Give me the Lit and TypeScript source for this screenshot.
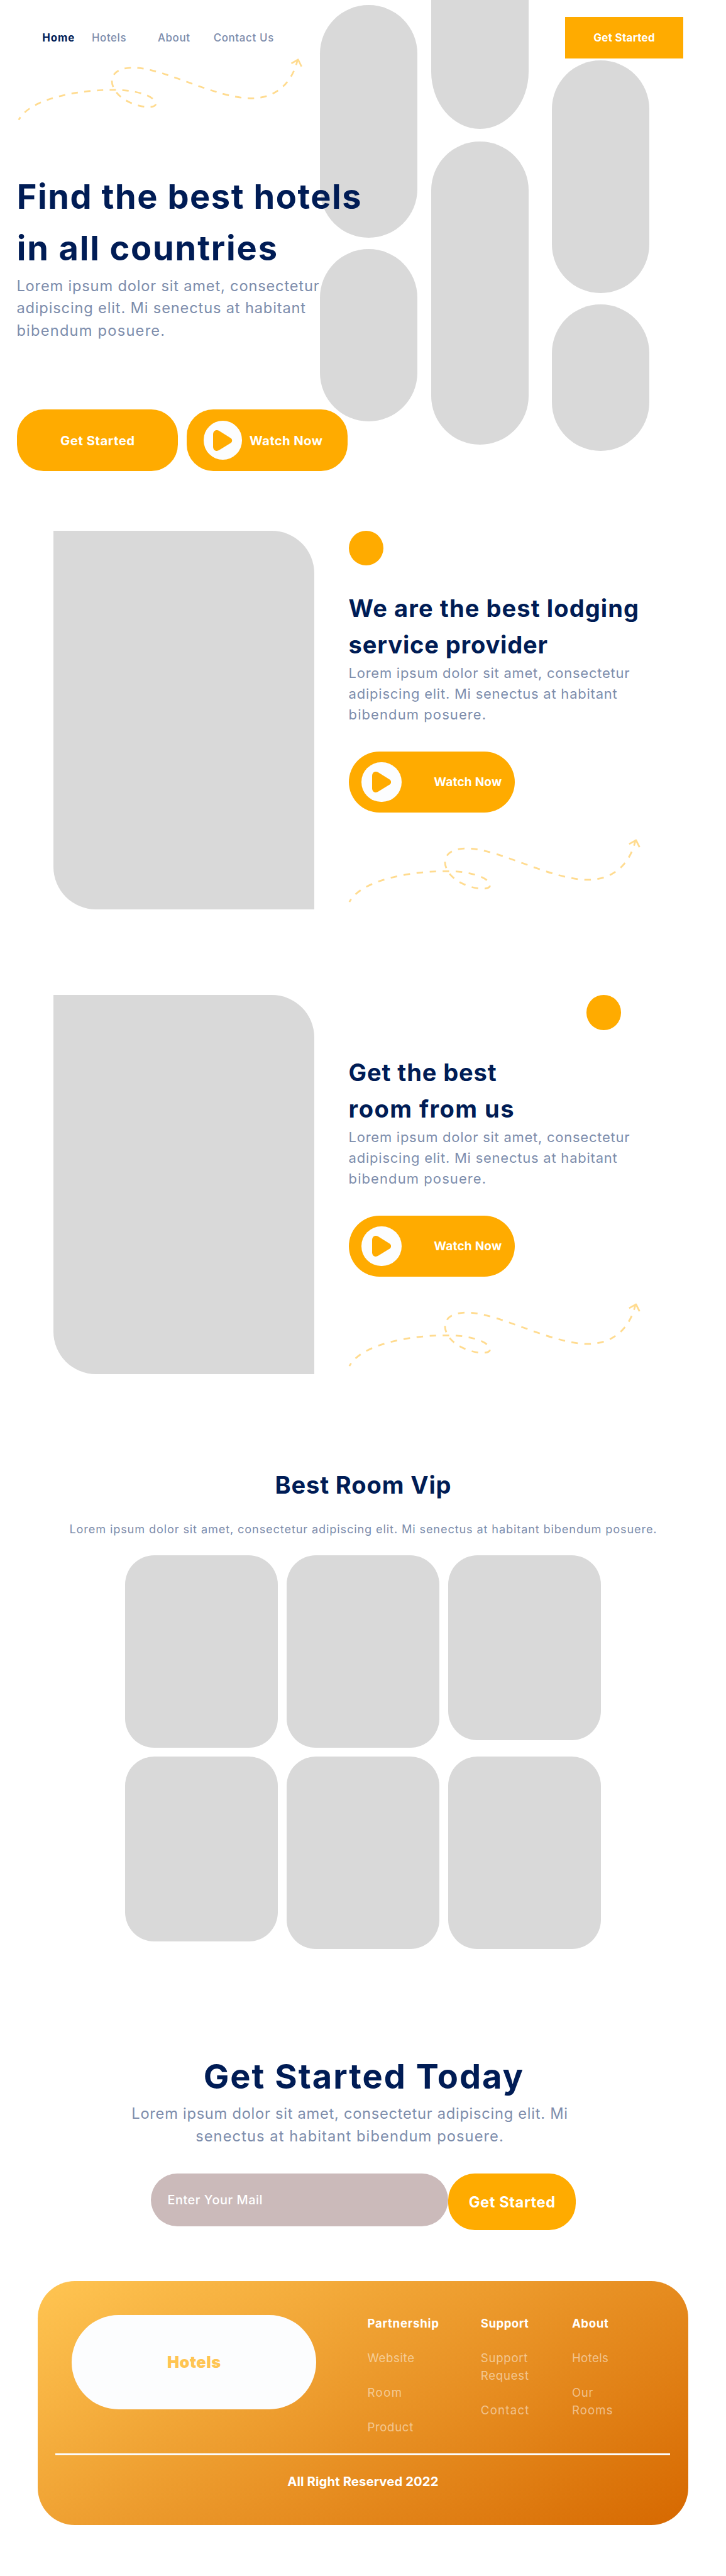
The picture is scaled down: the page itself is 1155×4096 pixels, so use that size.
import { LitElement, html, css, svg, unsafeCSS } from "lit";
import { customElement, property } from "lit/decorators.js";

// Design units are laid out on a 1366px wide canvas and scaled to the 1155px viewport.
const SCALE = 0.8455;
const u = (n: number) => unsafeCSS(`${(n * SCALE).toFixed(2)}px`);

type Line = [text: string, tracking: number];

const run = ([text, tracking]: Line) =>
  html`<span style="letter-spacing:${tracking}em;margin-right:${-tracking}em">${text}</span>`;

const lines = (items: Line[]) => items.map((l) => html`<span class="line">${run(l)}</span>`);

const base = css`
  * {
    box-sizing: border-box;
  }
  h1,
  h2,
  p {
    margin: 0;
  }
  .line {
    display: block;
    white-space: nowrap;
  }
  span {
    white-space: nowrap;
  }
  svg {
    display: block;
    flex: none;
  }
`;

@customElement("dashed-trail")
class DashedTrail extends LitElement {
  static styles = css`
    :host {
      display: block;
    }
    svg {
      display: block;
      width: 100%;
      height: 100%;
    }
    path {
      fill: none;
      stroke: #ffdb8f;
      stroke-width: 3.2;
    }
    .trail {
      stroke-dasharray: 12 12;
      stroke-dashoffset: 6;
    }
    .tip {
      stroke-linejoin: round;
    }
  `;
  render() {
    return html`<svg viewBox="32 106 540 124" preserveAspectRatio="none">
      ${svg`
        <path class="trail" d="M35.3 225C60 180 165 168 213 168.7C250 168 290 178 293.3 194C294 205 262 202 240 190C215 177 209 158 211 148C214 133 230 126 255 127C315 130 405 184.5 474 184.5C520 184 550 155 560 112"/>
        <path class="tip" d="M548.3 118.8L561 111.6L567.4 124.6"/>
      `}
    </svg>`;
  }
}

@customElement("play-badge")
class PlayBadge extends LitElement {
  static styles = css`
    :host {
      display: flex;
      align-items: center;
      justify-content: center;
      flex: none;
      width: ${u(72.5)};
      height: ${u(74)};
      border-radius: ${u(37)};
      background: #fcfdfe;
    }
    svg {
      width: ${u(36)};
      height: ${u(39)};
      fill: #ffab00;
    }
  `;
  render() {
    return html`<svg viewBox="0 0 36 39">
      ${svg`<path d="M0 8C0 3 3 0 7 0C8.6 0 10 .5 11.3 1.3L33 14.7C36.6 17 36.6 22 33 24.3L11.3 37.7C10 38.5 8.6 39 7 39C3 39 0 36 0 31Z"/>`}
    </svg>`;
  }
}

@customElement("feature-block")
class FeatureBlock extends LitElement {
  @property({ attribute: false }) heading: Line[] = [];
  @property({ type: Boolean, reflect: true }) right = false;

  static styles = [
    base,
    css`
      :host {
        display: grid;
        grid-template-columns: ${u(491)} ${u(554)};
        column-gap: ${u(64.2)};
        height: ${u(713)};
        padding-left: ${u(100.8)};
      }
      .photo {
        background: #d9d9d9;
        border-radius: 0 ${u(80)} 0 ${u(80)};
      }
      .dot {
        width: ${u(66)};
        height: ${u(66)};
        border-radius: 50%;
        background: #ffab00;
      }
      :host([right]) .dot {
        margin-left: ${u(447)};
      }
      h2 {
        margin-top: ${u(47)};
        font-size: ${u(45)};
        line-height: ${u(68)};
        font-weight: 750;
        color: #001c55;
      }
      p {
        font-size: ${u(26)};
        line-height: ${u(39)};
        color: #7d8dac;
      }
      .watch {
        display: flex;
        align-items: center;
        width: ${u(312.3)};
        height: ${u(115.7)};
        margin-top: ${u(49.1)};
        padding-left: ${u(24)};
        gap: ${u(60.5)};
        border-radius: ${u(58)};
        background: #ffab00;
        color: #fff;
        font-size: ${u(22.5)};
        font-weight: 700;
      }
      play-badge {
        width: ${u(76)};
      }
      dashed-trail {
        width: ${u(554)};
        height: ${u(127)};
        margin: ${u(46)} 0 0 ${u(-1.4)};
      }
    `,
  ];

  render() {
    return html`
      <div class="photo"></div>
      <div class="copy">
        <div class="dot"></div>
        <h2>${lines(this.heading)}</h2>
        <p>
          ${lines([
            ["Lorem ipsum dolor sit amet, consectetur", 0.0341],
            ["adipiscing elit. Mi senectus at habitant", 0.0354],
            ["bibendum posuere.", 0.0497],
          ])}
        </p>
        <div class="watch"><play-badge></play-badge>${run(["Watch Now", 0.012])}</div>
        <dashed-trail></dashed-trail>
      </div>
    `;
  }
}

@customElement("site-footer")
class SiteFooter extends LitElement {
  static styles = [
    base,
    css`
      :host {
        display: block;
        width: ${u(1223.8)};
        height: ${u(459)};
        border-radius: ${u(70)};
        padding-top: ${u(64)};
        background: linear-gradient(148deg, #ffc552 0%, #d66800 100%);
        color: #fff;
      }
      .top {
        display: grid;
        grid-template-columns: ${u(460)} ${u(213.4)} ${u(171.6)} ${u(120)};
        height: ${u(260.3)};
        padding-left: ${u(64)};
      }
      .logo {
        display: flex;
        align-items: center;
        justify-content: center;
        height: ${u(176.7)};
        border-radius: ${u(88.4)};
        background: #fcfdfe;
        color: #ffc552;
        font-size: ${u(30)};
        font-weight: 900;
      }
      .col {
        display: flex;
        flex-direction: column;
        gap: ${u(32.1)};
        margin-left: ${u(96.2)};
        margin-right: ${u(-96.2)};
        font-size: ${u(22)};
        line-height: ${u(33)};
      }
      .title {
        font-weight: 700;
      }
      .link {
        color: rgba(255, 255, 255, 0.5);
      }
      .rule {
        height: 3px;
        margin: 0 ${u(33.5)};
        background: #fafbfc;
      }
      .copyright {
        margin-top: ${u(31.3)};
        text-align: center;
        font-size: ${u(24)};
        line-height: ${u(36)};
        font-weight: 750;
      }
    `,
  ];

  private columns: { title: Line; links: Line[][] }[] = [
    {
      title: ["Partnership", 0.0389],
      links: [[["Website", 0.0358]], [["Room", 0.08]], [["Product", 0.0363]]],
    },
    {
      title: ["Support", 0.0249],
      links: [
        [
          ["Support", 0.0388],
          ["Request", 0.0411],
        ],
        [["Contact", 0.0683]],
      ],
    },
    {
      title: ["About", 0.0332],
      links: [
        [["Hotels", 0.0211]],
        [
          ["Our", 0.0379],
          ["Rooms", 0.0626],
        ],
      ],
    },
  ];

  render() {
    return html`
      <div class="top">
        <div class="logo">${run(["Hotels", 0.0199])}</div>
        ${this.columns.map(
          (c) => html`<div class="col">
            <div class="title">${run(c.title)}</div>
            ${c.links.map((l) => html`<div class="link">${lines(l)}</div>`)}
          </div>`
        )}
      </div>
      <div class="rule"></div>
      <div class="copyright">${run(["All Right Reserved 2022", 0.005])}</div>
    `;
  }
}

@customElement("app-root")
class AppRoot extends LitElement {
  static styles = [
    base,
    css`
      :host {
        display: block;
        width: 1155px;
        height: 4096px;
        overflow: hidden;
        background: #fff;
        font-family: Inter, "Open Sans", sans-serif;
        color: #001c55;
      }
      .hero {
        position: relative;
        height: ${u(997.8)};
      }
      .pills {
        position: absolute;
        top: 0;
        left: ${u(602.4)};
        display: flex;
      }
      .stack {
        display: flex;
        flex-direction: column;
        width: ${u(183)};
      }
      .pill {
        border-radius: ${u(91.5)};
        background: #d9d9d9;
      }
      .one {
        padding-top: ${u(9.3)};
        gap: ${u(20.8)};
      }
      .two {
        margin-left: ${u(25.8)};
        gap: ${u(23)};
      }
      .three {
        padding-top: ${u(113)};
        margin-left: ${u(44.4)};
        gap: ${u(21.5)};
      }
      .tall {
        height: ${u(437.8)};
      }
      .mid {
        height: ${u(324)};
      }
      .cut {
        height: ${u(243)};
        border-radius: 0 0 ${u(91.5)} ${u(91.5)} / 0 0 ${u(108)} ${u(108)};
      }
      .long {
        height: ${u(570)};
      }
      .short {
        height: ${u(275.3)};
      }
      .content {
        position: relative;
      }
      header {
        display: flex;
        align-items: center;
        justify-content: space-between;
        padding: ${u(32)} ${u(80.2)} 0 ${u(79.6)};
        font-size: ${u(20)};
      }
      nav {
        display: grid;
        grid-template-columns: ${u(93)} ${u(124.3)} ${u(104.8)} auto;
        color: #7d8dac;
        font-weight: 550;
      }
      .active {
        color: #001c55;
        font-weight: 650;
      }
      .cta {
        display: flex;
        align-items: center;
        justify-content: center;
        width: ${u(223)};
        height: ${u(78)};
        background: #ffab00;
        color: #fff;
        font-weight: 700;
      }
      .hero dashed-trail {
        width: ${u(540)};
        height: ${u(124)};
        margin: ${u(-4)} 0 0 ${u(32)};
      }
      h1 {
        font-size: ${u(64)};
        font-weight: 750;
      }
      .lead {
        font-size: ${u(28)};
        line-height: ${u(42)};
        color: #7d8dac;
      }
      .hero h1 {
        margin: ${u(91.2)} 0 0 ${u(31.7)};
        line-height: ${u(97.7)};
      }
      .hero .lead {
        padding-left: ${u(31.2)};
      }
      .actions {
        display: flex;
        gap: ${u(16.2)};
        margin: ${u(127.4)} 0 0 ${u(31.9)};
      }
      .btn {
        display: flex;
        align-items: center;
        justify-content: center;
        width: ${u(303)};
        height: ${u(116)};
        border-radius: ${u(50)};
        background: #ffab00;
        color: #fff;
        font-size: ${u(24)};
        font-weight: 700;
      }
      .play {
        justify-content: flex-start;
        padding-left: ${u(31.7)};
        gap: ${u(14)};
      }
      .second {
        margin-top: ${u(160)};
      }
      .rooms {
        padding-top: ${u(175.2)};
        text-align: center;
      }
      .rooms h2 {
        font-size: ${u(45)};
        line-height: ${u(68)};
        font-weight: 750;
      }
      .rooms p {
        margin-top: ${u(32.7)};
        font-size: ${u(21.5)};
        line-height: ${u(33)};
        color: #7d8dac;
      }
      .cards {
        display: grid;
        grid-template-columns: repeat(3, ${u(288)});
        grid-template-rows: repeat(2, ${u(362.3)});
        gap: ${u(16)} ${u(16.2)};
        justify-content: center;
        align-items: start;
        margin-top: ${u(32)};
      }
      .card {
        height: 100%;
        border-radius: ${u(55)};
        background: #d9d9d9;
      }
      .low {
        height: ${u(348)};
      }
      .join h1 {
        margin-top: ${u(192.1)};
        padding-left: ${u(1)};
        line-height: ${u(96)};
        text-align: center;
      }
      .join .lead {
        width: ${u(820)};
        margin: ${u(1.2)} 0 0 ${u(247.6)};
        text-align: center;
      }
      .form {
        display: flex;
        align-items: flex-start;
        margin: ${u(49.4)} 0 0 ${u(283.9)};
        color: #fff;
      }
      .field {
        display: flex;
        align-items: center;
        width: ${u(559.8)};
        height: ${u(99)};
        padding-left: ${u(31.2)};
        border-radius: ${u(50)};
        background: #cbbaba;
        font-size: ${u(23.5)};
        font-weight: 500;
      }
      .submit {
        width: ${u(239.3)};
        height: ${u(106)};
        font-size: ${u(28)};
      }
      site-footer {
        margin: ${u(96)} 0 0 ${u(71)};
      }
    `,
  ];

  render() {
    return html`
      <section class="hero">
        <div class="pills">
          <div class="stack one"><div class="pill tall"></div><div class="pill mid"></div></div>
          <div class="stack two"><div class="pill cut"></div><div class="pill long"></div></div>
          <div class="stack three"><div class="pill tall"></div><div class="pill short"></div></div>
        </div>
        <div class="content">
          <header>
            <nav>
              <div class="active">${run(["Home", 0.05])}</div>
              <div>${run(["Hotels", 0.0345])}</div>
              <div>${run(["About", 0.034])}</div>
              <div>${run(["Contact Us", 0.0385])}</div>
            </nav>
            <div class="cta">${run(["Get Started", 0.0195])}</div>
          </header>
          <dashed-trail></dashed-trail>
          <h1>
            ${lines([
              ["Find the best hotels", 0.0286],
              ["in all countries", 0.034],
            ])}
          </h1>
          <p class="lead">
            ${lines([
              ["Lorem ipsum dolor sit amet, consectetur", 0.0342],
              ["adipiscing elit. Mi senectus at habitant", 0.0352],
              ["bibendum posuere.", 0.0513],
            ])}
          </p>
          <div class="actions">
            <div class="btn">${run(["Get Started", 0.0253])}</div>
            <div class="btn play"><play-badge></play-badge>${run(["Watch Now", 0.0186])}</div>
          </div>
        </div>
      </section>

      <feature-block
        .heading=${[
          ["We are the best lodging", 0.0285],
          ["service provider", 0.0224],
        ]}
      ></feature-block>
      <feature-block
        class="second"
        right
        .heading=${[
          ["Get the best", 0.0229],
          ["room from us", 0.0385],
        ]}
      ></feature-block>

      <section class="rooms">
        <h2>${run(["Best Room Vip", 0.0229])}</h2>
        <p>
          ${run([
            "Lorem ipsum dolor sit amet, consectetur adipiscing elit. Mi senectus at habitant bibendum posuere.",
            0.0474,
          ])}
        </p>
        <div class="cards">
          <div class="card"></div>
          <div class="card"></div>
          <div class="card low"></div>
          <div class="card low"></div>
          <div class="card"></div>
          <div class="card"></div>
        </div>
      </section>

      <section class="join">
        <h1>${run(["Get Started Today", 0.0374])}</h1>
        <p class="lead">
          ${lines([
            ["Lorem ipsum dolor sit amet, consectetur adipiscing elit. Mi", 0.0309],
            ["senectus at habitant bibendum posuere.", 0.0459],
          ])}
        </p>
        <div class="form">
          <div class="field">${run(["Enter Your Mail", 0.0275])}</div>
          <div class="btn submit">${run(["Get Started", 0.0244])}</div>
        </div>
      </section>

      <site-footer></site-footer>
    `;
  }
}
